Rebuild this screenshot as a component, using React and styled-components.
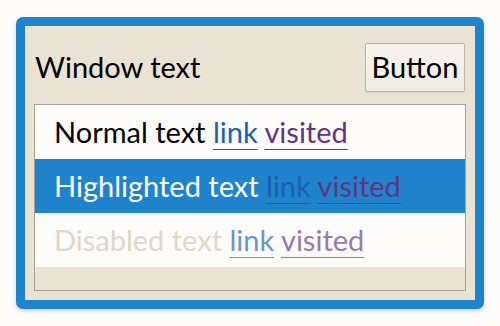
import React from "react";
import styled, { createGlobalStyle } from "styled-components";

const GlobalStyle = createGlobalStyle`
  html, body {
    margin: 0;
    background: #fdfcfb;
  }
  body {
    font-family: Lato, "Open Sans", sans-serif;
    padding: 17px 16px;
  }
`;

const Window = styled.div`
  box-sizing: border-box;
  width: 468px;
  height: 292px;
  border: 9px solid #1f84cc;
  border-radius: 7px;
  background: #eae2d3;
  box-shadow: 0 2px 4px rgba(0, 0, 0, 0.18);
  padding: 17px 9px 9px 9px;
  display: flex;
  flex-direction: column;
  gap: 12px;
`;

const Header = styled.div`
  display: flex;
  align-items: flex-start;
  justify-content: space-between;
  padding-left: 1px;
`;

const Label = styled.div`
  font-size: 29px;
  color: #000;
  line-height: 1;
  padding-top: 9px;
`;

const Button = styled.button`
  box-sizing: border-box;
  width: 100px;
  height: 49px;
  margin-right: 1px;
  font-family: inherit;
  font-size: 29px;
  color: #000;
  background: linear-gradient(#f7f4ee, #f1ece3);
  border: 1px solid #bdb5a8;
  border-radius: 2px;
  box-shadow: 0 1px 1px rgba(0, 0, 0, 0.08);
  padding: 0 0 2px 0;
`;

const ListBox = styled.div`
  box-sizing: border-box;
  flex: 1;
  border: 1px solid #a9a195;
  background: #eae2d3;
  display: flex;
  flex-direction: column;
`;

const Row = styled.div`
  height: 54px;
  line-height: 54px;
  padding: 0 19px 2px;
  box-sizing: border-box;
  font-size: 29px;
  white-space: nowrap;
  background: ${(p) => (p.$highlight ? "#1f84cc" : "#fdfcfb")};
  color: ${(p) => (p.$highlight ? "#ffffff" : p.$disabled ? "#e0d7c8" : "#000")};
`;

const Link = styled.span`
  color: ${(p) => (p.$visited ? "#613583" : "#1a5fb4")};
  opacity: ${(p) => (p.$disabled ? 0.65 : 1)};
  text-decoration: underline;
  text-decoration-thickness: 1px;
  text-underline-offset: 6px;
`;

const rows = [
  { text: "Normal text" },
  { text: "Highlighted text", highlight: true },
  { text: "Disabled text", disabled: true },
];

export default function App() {
  return (
    <>
      <GlobalStyle />
      <Window>
        <Header>
          <Label>Window text</Label>
          <Button>Button</Button>
        </Header>
        <ListBox>
          {rows.map((r) => (
            <Row key={r.text} $highlight={r.highlight} $disabled={r.disabled}>
              {r.text} <Link $disabled={r.disabled}>link</Link>{" "}
              <Link $visited $disabled={r.disabled}>visited</Link>
            </Row>
          ))}
        </ListBox>
      </Window>
    </>
  );
}
